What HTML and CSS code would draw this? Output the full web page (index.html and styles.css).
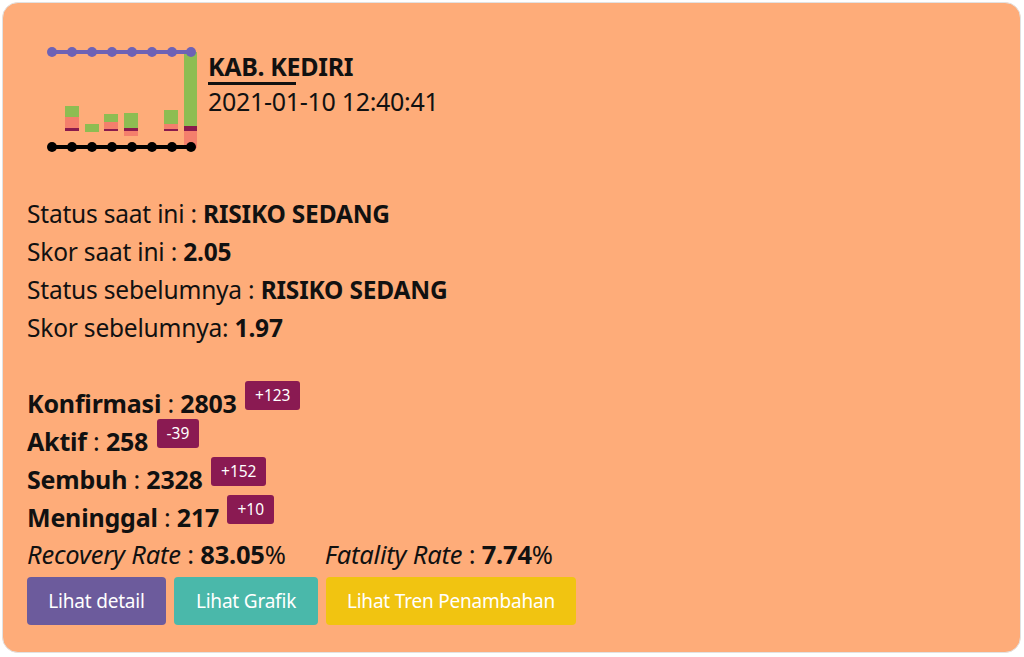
FILE: index.html
```html
<!DOCTYPE html>
<html>
<head>
<meta charset="utf-8">
<link rel="stylesheet" href="styles.css">
</head>
<body>
<div class="card">
  <div class="header">
    <svg class="chart" width="156" height="110" viewBox="0 0 156 110">
      <rect x="19" y="62" width="14" height="11" fill="#8dbd52"/>
      <rect x="19" y="73" width="14" height="11" fill="#f47f6c"/>
      <rect x="19" y="84" width="14" height="3" fill="#8a1a4c"/>
      <rect x="39" y="80" width="14" height="8" fill="#8dbd52"/>
      <rect x="58" y="70" width="14" height="8" fill="#8dbd52"/>
      <rect x="58" y="78" width="14" height="7" fill="#f47f6c"/>
      <rect x="58" y="85" width="14" height="2" fill="#8a1a4c"/>
      <rect x="78" y="69" width="14" height="15" fill="#8dbd52"/>
      <rect x="78" y="84" width="14" height="3" fill="#8a1a4c"/>
      <rect x="78" y="87" width="14" height="5" fill="#f47f6c"/>
      <rect x="118" y="66" width="14" height="14" fill="#8dbd52"/>
      <rect x="118" y="80" width="14" height="5" fill="#f47f6c"/>
      <rect x="118" y="85" width="14" height="2" fill="#8a1a4c"/>
      <rect x="138" y="8" width="13" height="74" fill="#8dbd52"/>
      <rect x="138" y="82" width="13" height="5" fill="#8a1a4c"/>
      <rect x="138" y="87" width="13" height="17" fill="#f47f6c"/>
      <polyline points="6,8 26,8 46,8 66,8 86,8 106,8 126,8 145,8" fill="none" stroke="#6d62b5" stroke-width="4"/>
      <g fill="#6d62b5">
        <circle cx="6" cy="8" r="5"/><circle cx="26" cy="8" r="5"/><circle cx="46" cy="8" r="5"/><circle cx="66" cy="8" r="5"/>
        <circle cx="86" cy="8" r="5"/><circle cx="106" cy="8" r="5"/><circle cx="126" cy="8" r="5"/><circle cx="145" cy="8" r="5"/>
      </g>
      <polyline points="6,103 26,103 46,103 66,103 86,103 106,103 126,103 145,103" fill="none" stroke="#000" stroke-width="4"/>
      <g fill="#000">
        <circle cx="6" cy="103" r="5"/><circle cx="26" cy="103" r="5"/><circle cx="46" cy="103" r="5"/><circle cx="66" cy="103" r="5"/>
        <circle cx="86" cy="103" r="5"/><circle cx="106" cy="103" r="5"/><circle cx="126" cy="103" r="5"/><circle cx="145" cy="103" r="5"/>
      </g>
    </svg>
    <div class="title-block">
      <div class="title">KAB. KEDIRI</div>
      <div class="underline"></div>
      <div class="date">2021-01-10 12:40:41</div>
    </div>
  </div>

  <div class="status">
    <div class="line">Status saat ini : <b>RISIKO SEDANG</b></div>
    <div class="line">Skor saat ini : <b>2.05</b></div>
    <div class="line">Status sebelumnya : <b>RISIKO SEDANG</b></div>
    <div class="line">Skor sebelumnya: <b>1.97</b></div>
  </div>

  <div class="stats">
    <div class="stat"><b>Konfirmasi</b> : <b>2803</b> <span class="badge">+123</span></div>
    <div class="stat"><b>Aktif</b> : <b>258</b> <span class="badge">-39</span></div>
    <div class="stat"><b>Sembuh</b> : <b>2328</b> <span class="badge">+152</span></div>
    <div class="stat"><b>Meninggal</b> : <b>217</b> <span class="badge">+10</span></div>
    <div class="rates"><span><i>Recovery Rate</i> : <b>83.05</b>%</span><span class="rate2"><i>Fatality Rate</i> : <b>7.74</b>%</span></div>
  </div>

  <div class="buttons">
    <button class="btn btn-purple">Lihat detail</button>
    <button class="btn btn-teal">Lihat Grafik</button>
    <button class="btn btn-yellow">Lihat Tren Penambahan</button>
  </div>
</div>
</body>
</html>
```

FILE: styles.css
```css
html, body {
  margin: 0;
  padding: 0;
  background: #ffffff;
}
body {
  font-family: "Noto Sans", "Open Sans", sans-serif;
  color: #111;
}
.card {
  margin: 2px 3px 2px 2px;
  height: 651px;
  box-sizing: border-box;
  background: #feac79;
  border: 1px solid #e2e2e2;
  border-radius: 16px;
  padding: 41px 24px 0 24px;
}
.header {
  display: flex;
  align-items: flex-start;
}
.chart {
  display: block;
  margin-left: 19px;
  flex: none;
}
.title-block {
  margin-left: 6px;
  margin-top: 8px;
}
.title {
  font-size: 25px;
  font-weight: 700;
  line-height: 28px;
  letter-spacing: -0.3px;
}
.underline {
  width: 88px;
  height: 3px;
  background: #111;
  margin-top: 2px;
}
.date {
  font-size: 25px;
  line-height: 30px;
  margin-top: 1px;
  letter-spacing: -0.3px;
}
.status {
  margin-top: 41px;
}
.line, .stat, .rates {
  font-size: 24.5px;
  line-height: 38px;
  height: 38px;
  white-space: nowrap;
  letter-spacing: -0.2px;
}
.stats {
  margin-top: 34px;
}
.stat {
  font-size: 25px;
}
.badge {
  display: inline-block;
  vertical-align: 12px;
  background: #8a1a52;
  color: #fff;
  font-size: 15.5px;
  line-height: 21px;
  padding: 4px 10px;
  border-radius: 3px;
  margin-left: 2px;
  letter-spacing: 0;
}
.rates {
  font-size: 25.5px;
  margin-top: 2px;
}
.rate2 {
  margin-left: 39px;
}
.buttons {
  display: flex;
  gap: 8px;
  margin-top: 4px;
}
.btn {
  font-family: "Noto Sans", "Open Sans", sans-serif;
  height: 48px;
  border: none;
  border-radius: 4px;
  color: #fff;
  font-size: 19px;
  padding: 0;
  letter-spacing: -0.2px;
}
.btn-purple { background: #6c5b9c; width: 139px; }
.btn-teal { background: #4ab8aa; width: 144px; }
.btn-yellow { background: #f1c411; width: 250px; }
```
